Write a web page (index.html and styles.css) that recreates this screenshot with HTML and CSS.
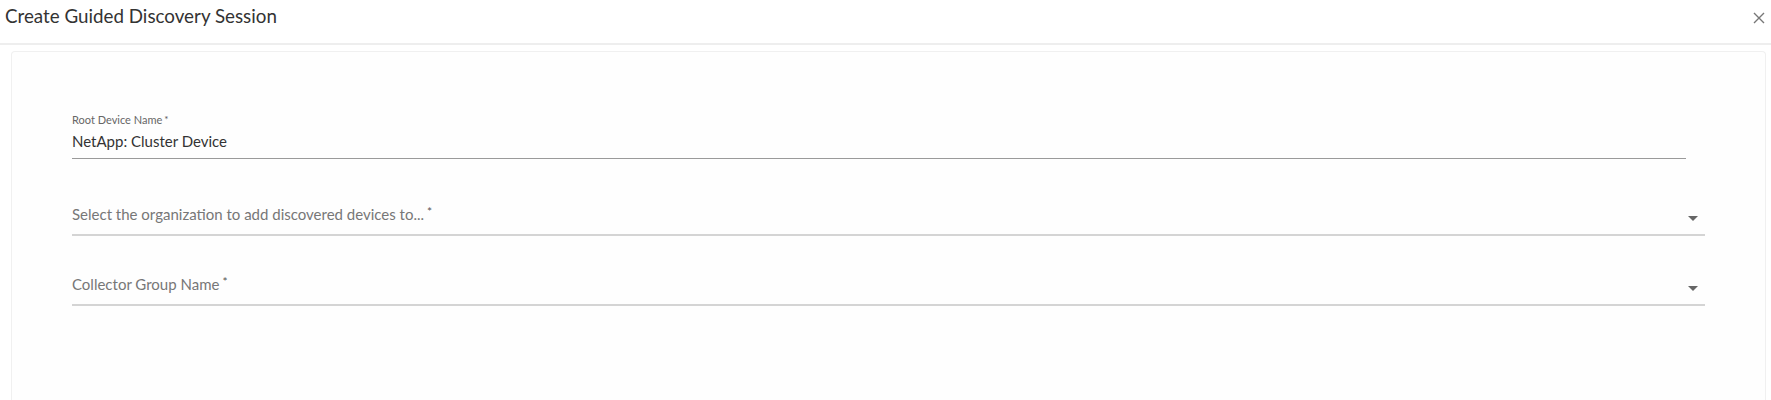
FILE: index.html
```html
<!DOCTYPE html>
<html>
<head>
<meta charset="utf-8">
<link rel="stylesheet" href="styles.css">
</head>
<body>
<div class="header">
  <div class="title">Create Guided Discovery Session</div>
  <button class="close" aria-label="close">
    <svg width="12" height="12" viewBox="0 0 12 12"><path d="M1 1L11 11M11 1L1 11" stroke="#777" stroke-width="1.4" fill="none"/></svg>
  </button>
</div>
<div class="card">
  <div class="field text-field">
    <div class="label">Root Device Name<span class="req">*</span></div>
    <div class="value">NetApp: Cluster Device</div>
  </div>
  <div class="field select-field first">
    <div class="placeholder">Select the organization to add discovered devices to...<span class="req">*</span></div>
    <span class="arrow"></span>
  </div>
  <div class="field select-field second">
    <div class="placeholder">Collector Group Name<span class="req">*</span></div>
    <span class="arrow"></span>
  </div>
</div>
</body>
</html>
```
FILE: styles.css
```css
html, body {
  margin: 0;
  padding: 0;
  background: #ffffff;
  font-family: Lato, "Open Sans", sans-serif;
  color: #333;
  height: 400px;
  overflow: hidden;
}
.header {
  height: 43px;
  display: flex;
  align-items: flex-start;
  justify-content: space-between;
  border-bottom: 2px solid #eeeeee;
  padding: 0 6px 0 5px;
}
.title {
  font-size: 18.8px;
  line-height: 22px;
  margin-top: 5px;
  color: #333;
}
.close {
  background: none;
  border: 0;
  padding: 0;
  margin-top: 12px;
  width: 12px;
  height: 12px;
  display: flex;
}
.card {
  box-sizing: border-box;
  margin: 6px 5px 0 11px;
  background: #fefefe;
  border: 1px solid #f0f0f0;
  border-bottom: none;
  border-radius: 4px 4px 0 0;
  padding: 61px 60px 0 60px;
  height: 349px;
}
.field {
  position: relative;
}
.label {
  font-size: 11px;
  line-height: 14px;
  color: #666;
}
.req {
  font-size: 10px;
  vertical-align: top;
  margin-left: 2px;
  position: relative;
  top: -1px;
  color: #555;
}
.placeholder .req {
  margin-left: 3px;
  font-size: 12px;
  top: -2px;
}
.text-field {
  margin-right: 19px;
  border-bottom: 1px solid #9a9a9a;
}
.value {
  font-size: 15px;
  line-height: 20px;
  margin-top: 4px;
  padding-bottom: 7px;
  color: #333;
}
.select-field {
  border-bottom: 2px solid #d4d4d4;
  padding-bottom: 10px;
}
.select-field.first {
  margin-top: 45px;
}
.select-field.second {
  margin-top: 38px;
}
.placeholder {
  font-size: 15px;
  line-height: 20px;
  color: #777;
}
.arrow {
  position: absolute;
  right: 7px;
  top: 12px;
  width: 0;
  height: 0;
  border-left: 5px solid transparent;
  border-right: 5px solid transparent;
  border-top: 5px solid #666;
}
```
